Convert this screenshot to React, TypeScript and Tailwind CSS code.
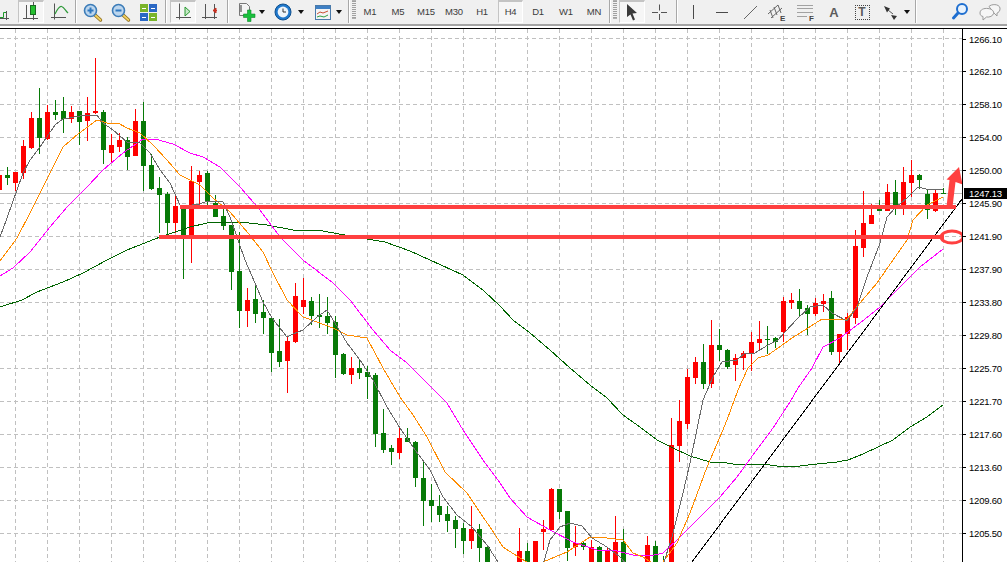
import React from 'react';

type C = [number, 'R' | 'G', number, number, number, number];
const candles: C[] = [
  [0,'R',170,195,175,190],[1,'G',167,185,175,178],[2,'R',172,191,172,183],[3,'R',140,179,146,173],[4,'R',112,149,118,148],
  [5,'G',88,154,118,138],[6,'R',105,140,112,139],[7,'G',100,120,112,115],[8,'G',97,133,111,119],[9,'R',106,123,112,119],
  [10,'G',111,145,111,122],[11,'R',97,141,113,121],[12,'R',58,114,111,113],[13,'G',110,164,112,150],[14,'R',134,162,145,153],
  [15,'R',133,152,140,147],[16,'G',137,170,140,157],[17,'R',109,156,121,156],[18,'G',102,191,121,166],[19,'G',154,190,165,189],
  [20,'G',177,233,188,195],[21,'G',192,234,194,223],[22,'R',195,233,206,223],[23,'G',205,279,209,235],[24,'R',166,263,181,235],
  [25,'R',171,205,175,182],[26,'G',171,205,173,201],[27,'G',195,217,203,217],[28,'G',205,230,216,226],[29,'G',225,290,225,272],
  [30,'G',232,328,271,311],[31,'R',288,327,300,311],[32,'G',284,323,299,314],[33,'G',300,334,312,318],[34,'G',316,372,318,353],
  [35,'G',319,367,351,362],[36,'R',336,393,341,361],[37,'R',283,343,296,342],[38,'R',278,314,300,307],[39,'G',297,325,301,316],
  [40,'G',294,328,315,317],[41,'G',297,334,316,323],[42,'G',316,378,322,355],[43,'G',353,375,354,374],[44,'R',357,384,368,375],
  [45,'G',359,379,368,373],[46,'G',366,399,372,377],[47,'G',373,447,375,434],[48,'G',409,453,433,450],[49,'G',445,465,448,452],
  [50,'R',428,459,438,453],[51,'G',428,442,438,442],[52,'G',441,487,442,478],[53,'G',460,526,478,501],[54,'G',484,522,500,506],
  [55,'G',495,522,506,515],[56,'G',506,532,514,521],[57,'G',516,548,520,529],[58,'G',523,554,528,541],[59,'R',506,549,529,541],
  [60,'G',524,570,529,548],[61,'G',546,570,547,570],[65,'R',528,570,551,570],[66,'G',543,570,551,570],[67,'R',541,570,541,570],
  [68,'R',520,550,529,532],[69,'R',488,531,489,530],[70,'G',489,519,489,512],[71,'G',511,561,511,548],[72,'R',526,556,543,547],
  [73,'G',541,550,543,547],[74,'R',540,570,547,570],[75,'G',546,570,547,570],[76,'R',547,570,551,570],[77,'R',516,570,542,570],
  [78,'G',529,570,542,570],[81,'R',536,570,545,570],[82,'G',541,570,546,570],[83,'G',556,570,570,570],[84,'R',418,570,445,570],
  [85,'R',400,462,421,446],[86,'R',369,429,377,424],[87,'R',357,384,362,378],[88,'G',344,389,362,384],[89,'R',320,388,345,384],
  [90,'G',329,361,345,350],[91,'G',349,369,350,367],[92,'R',354,381,358,365],[93,'R',351,370,353,358],[94,'R',332,371,342,354],
  [95,'R',321,350,339,343],[96,'G',326,354,339,340],[97,'G',337,348,338,342],[98,'R',297,342,301,332],[99,'R',293,309,300,303],
  [100,'G',289,317,301,309],[101,'G',305,335,308,314],[102,'R',298,316,303,314],[103,'R',294,312,301,304],[104,'G',291,355,298,352],
  [105,'R',334,363,334,352],[106,'R',313,350,317,334],[107,'R',230,324,246,318],[108,'R',191,257,223,248],[109,'R',204,224,215,224],
  [110,'G',200,211,209,211],[111,'R',184,211,192,211],[112,'G',180,215,192,209],[113,'R',167,215,182,209],[114,'R',160,197,175,183],
  [115,'G',174,189,175,180],[116,'G',189,219,194,210],[117,'R',190,212,193,211],[118,'G',188,194,193,194],
];

const grey = '0,237 7,218 17,190 23,173 30,160 40,147 55,125 63,119 80,116 97,115 103,123 113,130 127,142 140,143 150,153 160,170 170,183 180,205 192,205 200,204 207,201 223,202 230,217 245,260 255,283 263,302 272,318 287,337 293,334 303,330 317,317 327,310 335,323 347,343 360,360 373,380 387,407 400,428 413,447 430,470 443,497 457,515 472,527 487,545 500,565 543,565 550,540 560,527 570,523 582,526 592,538 607,547 620,557 627,565 663,565 672,537 683,493 690,463 703,400 713,377 722,362 737,360 745,353 755,353 768,345 778,340 785,332 798,318 810,307 823,305 832,313 847,321 857,307 867,277 880,243 887,217 895,208 907,198 918,187 930,190 943,189';
const orange = '0,261 17,238 30,213 43,187 63,147 78,134 97,120 107,123 118,123 127,128 140,133 153,145 167,160 180,175 200,185 213,198 230,212 248,233 263,252 273,273 287,300 303,317 317,322 333,328 347,335 367,338 383,368 400,397 413,415 427,437 445,472 467,493 483,517 490,527 503,547 520,558 532,565 543,562 567,552 590,537 607,538 623,540 633,553 643,557 655,565 663,562 677,543 690,513 707,467 720,437 727,420 738,390 748,368 758,358 768,355 778,348 792,338 808,328 822,319 847,319 860,303 877,283 893,260 907,240 913,220 927,205 943,197';
const magenta = '0,276 13,268 30,252 50,227 67,207 87,187 103,170 123,153 143,139 155,139 173,144 190,153 203,157 220,167 240,187 260,210 280,237 303,260 333,283 350,300 373,330 390,350 407,363 427,383 447,403 463,430 483,460 500,483 510,498 527,517 550,530 573,542 597,550 617,551 633,555 650,556 663,553 677,540 697,520 720,497 737,477 753,455 773,428 790,402 798,388 812,368 823,347 840,338 860,323 880,307 897,290 920,267 943,249';
const dark = '0,307 22,300 37,292 63,282 83,273 107,260 127,250 160,237 190,227 207,223 217,222 240,222 267,225 293,230 323,231 350,236 385,242 410,251 430,260 463,275 483,290 500,306 513,320 530,333 550,350 570,368 590,385 607,398 623,415 640,427 657,440 673,448 690,456 710,462 720,462 740,465 763,464 777,466 800,466 817,464 837,462 848,460 863,454 880,446 893,440 910,427 927,417 943,405';

const prices = ['1266.10','1262.10','1258.10','1254.00','1250.00','1245.90','1241.90','1237.90','1233.80','1229.80','1225.70','1221.70','1217.60','1213.60','1209.60','1205.50'];
const gridY = prices.map((_, i) => 38.5 + 32.97 * i);
const gridX = Array.from({ length: 30 }, (_, i) => 15.5 + 32 * i);

function Svg({ w = 24, children }: { w?: number; children: React.ReactNode }) {
  return <svg width={w} height={24} viewBox={`0 0 ${w} 24`} className="block shrink-0">{children}</svg>;
}
const Axes = ({ x = 6 }: { x?: number }) => <path d={`M${x + .5} 3.5v16M${x - 3} 17.5h15`} stroke="#555" fill="none" />;

const Sep = () => <div className="w-[2px] h-[23px] shrink-0 border-l border-[#a8a8a8] bg-white" />;
const Space = ({ w }: { w: number }) => <div className="shrink-0" style={{ width: w }} />;
const Slot = ({ w, children }: { w: number; children?: React.ReactNode }) => (
  <div className="shrink-0 h-6 flex items-center justify-center" style={{ width: w }}>{children}</div>
);
const Pressed = ({ children }: { children: React.ReactNode }) => (
  <div className="w-[26px] h-[23px] self-start shrink-0 flex items-center justify-center bg-[#f6f6f6] border-t-2 border-l border-[#c4c4c4] border-r border-r-white border-b border-b-white">{children}</div>
);
const Drop = () => (
  <Slot w={6}><svg width={6} height={4} viewBox="0 0 6 4" className="block"><path d="M0 0h6L3 4z" fill="#111" /></svg></Slot>
);
const Grip = () => (
  <div className="w-1 h-[19px] shrink-0 border-y border-[#b0b0b0] bg-[repeating-linear-gradient(to_bottom,#a0a0a0_0,#a0a0a0_1px,#f0f0f0_1px,#f0f0f0_2px)]" />
);
const Period = ({ t }: { t: string }) => <span className="text-[9.5px] tracking-[-0.2px] leading-none text-[#3c3c3c]">{t}</span>;

function Magnifier({ minus }: { minus?: boolean }) {
  return (
    <Svg>
      <path d="M15 15l5.500 5" stroke="#8a6a1c" strokeWidth={3.4} strokeLinecap="round" />
      <path d="M15 15l5.500 5" stroke="#f2d060" strokeWidth={1.8} strokeLinecap="round" />
      <circle cx={10.5} cy={10.5} r={6} fill="#bcd6ee" stroke="#3c7cb8" strokeWidth={1.6} />
      <path d={minus ? 'M7.500 10.500h6' : 'M7.500 10.500h6M10.500 7.500v6'} stroke="#2f78c0" strokeWidth={2} />
    </Svg>
  );
}

function Toolbar() {
  return (
    <div className="h-6 flex items-start bg-[#f0f0f0] overflow-hidden">
      <Slot w={18}>
        <svg width={18} height={24} viewBox="0 0 18 24" className="block">
          <path d="M0 17.5h3.5V12.5h3" stroke="#1d9a2a" fill="none" />
          <path d="M6.5 11v9M0 18.5h9" stroke="#555" fill="none" />
        </svg>
      </Slot>
      <Pressed>
        <Svg w={22}>
          <path d="M6.5 5v14M3 18.5h15M13.5 2v18" stroke="#555" fill="none" />
          <rect x={10.5} y={5.5} width={5} height={9} fill="#25c030" stroke="#1c6a22" />
        </Svg>
      </Pressed>
      <Slot w={31}>
        <Svg>
          <Axes x={6} />
          <path d="M7 14C9 10 11 6 13.5 6.5S17 10 20 13" stroke="#2f9a3a" strokeWidth={1.2} fill="none" />
        </Svg>
      </Slot>
      <Sep />
      <Slot w={29}><Magnifier /></Slot>
      <Slot w={28}><Magnifier minus /></Slot>
      <Slot w={28}>
        <svg width={17} height={17} viewBox="0 0 17 17" className="block">
          <rect width={8} height={8} fill="#7ab42a" /><rect x={9} width={8} height={8} fill="#2b68c4" />
          <rect y={9} width={8} height={8} fill="#2b68c4" /><rect x={9} y={9} width={8} height={8} fill="#7ab42a" />
          <path d="M2 4.5h4M11 4.5h4M2 13.5h4M11 13.5h4" stroke="#fff" />
        </svg>
      </Slot>
      <Space w={3} />
      <Sep />
      <Space w={3} />
      <Pressed>
        <Svg w={22}>
          <Axes x={7} />
          <path d="M13 7l5 4.5-5 4.5z" fill="#c6e8c6" stroke="#2a9a32" />
        </Svg>
      </Pressed>
      <Slot w={30}>
        <Svg>
          <path d="M6.5 4v15M3 17.5h15M15.5 4v15" stroke="#555" fill="none" />
          <path d="M18 10.5h-4M14 10.5l3-2.5v5z" stroke="#c83020" fill="#c83020" />
        </Svg>
      </Slot>
      <Space w={1} />
      <Sep />
      <Space w={2} />
      <Slot w={28}>
        <Svg>
          <path d="M6.5 3.5h7l3 3v9h-10z" fill="#f4f4f4" stroke="#777" />
          <path d="M8 5v7" stroke="#333" />
          <path d="M14.5 10v4h-4v3.500h4v4h3.500v-4h4V14h-4v-4z" fill="#18c03c" stroke="#0f8a2a" strokeWidth={0.6} />
        </Svg>
      </Slot>
      <Drop />
      <Space w={4} />
      <Slot w={28}>
        <Svg>
          <circle cx={12} cy={12} r={8} fill="#1f78cc" stroke="#10508e" />
          <circle cx={12} cy={12} r={5.4} fill="#eef4fa" />
          <path d="M12 8.500V12h3" stroke="#333" fill="none" />
        </Svg>
      </Slot>
      <Space w={1} />
      <Drop />
      <Space w={6} />
      <Slot w={25}>
        <svg width={16} height={15} viewBox="0 0 16 15" className="block">
          <rect x={0.5} y={0.5} width={15} height={14} fill="#f4f4f4" stroke="#4a7aaa" />
          <rect x={1} y={1} width={14} height={3} fill="#3f80c4" />
          <path d="M2 9l3-2 3 1 5-2" stroke="#c85030" fill="none" />
          <path d="M2 12l3-1 4 1 4-2" stroke="#30a040" fill="none" />
        </svg>
      </Slot>
      <Space w={1} />
      <Drop />
      <Space w={6} />
      <Sep />
      <Space w={2} />
      <Grip />
      {['M1','M5','M15','M30','H1'].map(t => <Slot key={t} w={28}><Period t={t} /></Slot>)}
      <Space w={2} />
      <div className="w-[25px] shrink-0 flex justify-center h-[23px] items-center bg-[#f6f6f6] border-t-2 border-l border-[#c4c4c4] border-r border-r-white border-b border-b-white"><Period t="H4" /></div>
      <Space w={1} />
      {['D1','W1','MN'].map(t => <Slot key={t} w={28}><Period t={t} /></Slot>)}
      <Space w={1} />
      <Sep />
      <Space w={2} />
      <Grip />
      <Space w={2} />
      <Pressed>
        <svg width={12} height={17} viewBox="0 0 12 17" className="block"><path d="M1 0l10 9-4.500 .5 2.500 6-2 1-2.500-6L1 13z" fill="#3a3a3a" /></svg>
      </Pressed>
      <Slot w={28}>
        <Svg><path d="M12.500 4.500v6M12.500 14v6M5 12.500h6M14 12.500h6" stroke="#555" fill="none" /></Svg>
      </Slot>
      <Space w={3} />
      <Sep />
      <Slot w={30}><Svg><path d="M12.500 5v14" stroke="#4a4a4a" /></Svg></Slot>
      <Slot w={28}><Svg><path d="M6 12.500h12" stroke="#4a4a4a" /></Svg></Slot>
      <Slot w={28}><Svg><path d="M6 19L19 6" stroke="#666" /></Svg></Slot>
      <Slot w={26}>
        <Svg>
          <path d="M3 14L13 5M6 18L17 8M5 10l3 8M9 7l3 8M13 5l3 8" stroke="#666" fill="none" />
          <text x={15} y={21} fontSize={8} fontWeight={700} fill="#444" fontFamily="Liberation Sans">E</text>
        </Svg>
      </Slot>
      <Slot w={30}>
        <Svg>
          <path d="M4.500 5.500h15M4.500 8.500h15M4.500 12.500h15M4.500 16.500h10" stroke="#555" strokeDasharray="1 1" fill="none" />
          <text x={16} y={21} fontSize={8} fontWeight={700} fill="#444" fontFamily="Liberation Sans">F</text>
        </Svg>
      </Slot>
      <Slot w={28}><span className="text-[13px] font-bold leading-none text-[#5c5c5c]">A</span></Slot>
      <Slot w={28}>
        <div className="relative w-[15px] h-[15px] border border-dotted border-[#444] flex items-center justify-center">
          <span className="text-[12px] font-bold leading-none text-[#5c5c5c]">T</span>
        </div>
      </Slot>
      <Slot w={28}>
        <Svg>
          <path d="M6 6l6 2.500-3 4z" fill="#333" />
          <path d="M10 10l5 4" stroke="#555" />
          <path d="M13 15l6 1-3 4z" fill="#333" />
        </Svg>
      </Slot>
      <Drop />
      <Space w={5} />
      <Sep />
      <Space w={30} />
      <Slot w={26}>
        <Svg>
          <circle cx={14} cy={9} r={5} fill="#e8f2fc" stroke="#1f6fd0" strokeWidth={2} />
          <path d="M10 13l-4.500 5" stroke="#1f6fd0" strokeWidth={3} strokeLinecap="round" />
        </Svg>
      </Slot>
      <Slot w={34}>
        <svg width={22} height={18} viewBox="0 0 22 18" className="block">
          <path d="M10 3.500C12 1 20 .5 21 5c.5 3-2 5-3 5l0 3-3-3z" fill="#f6f6f6" stroke="#9a9a9a" />
          <path d="M1 10c0-3.500 4-5 8-4.500s6 2.500 5.500 5-4 4-7 3.500L4 17v-3.500C2 13 1 12 1 10z" fill="#f6f6f6" stroke="#9a9a9a" />
        </svg>
      </Slot>
    </div>
  );
}

function Chart() {
  const green = '#077a07', red = '#ff0000';
  return (
    <svg width={962} height={533} viewBox="0 29 962 533" className="block shrink-0" shapeRendering="crispEdges">
      {gridY.map(y => <line key={y} x1={0} x2={962} y1={Math.floor(y) + .5} y2={Math.floor(y) + .5} stroke="#c0c0c0" strokeDasharray="4 3" />)}
      {gridX.map(x => <line key={x} x1={x} x2={x} y1={29} y2={562} stroke="#c0c0c0" strokeDasharray="4 3" />)}
      <line x1={0} x2={962} y1={193.5} y2={193.5} stroke="#c0c0c0" />
      {candles.map(([k, c, wt, wb, bt, bb]) => (
        <g key={k} fill={c === 'R' ? red : green}>
          <rect x={8 * k - 1} y={wt} width={1} height={wb - wt} />
          <rect x={8 * k - 3} y={bt} width={5} height={Math.max(bb - bt, 1)} />
        </g>
      ))}
      <polyline points={dark} fill="none" stroke="#006400" />
      <polyline points={magenta} fill="none" stroke="#ff00ff" />
      <polyline points={orange} fill="none" stroke="#ff8c00" />
      <polyline points={grey} fill="none" stroke="#696969" />
      <line x1={692} y1={562} x2={962} y2={199} stroke="#000" />
      <g shapeRendering="auto">
        <rect x={180} y={205} width={776} height={4} fill="#ff4040" />
        <rect x={159} y={235} width={785} height={4} fill="#ff4040" />
        <ellipse cx={952} cy={237} rx={11} ry={6} fill="none" stroke="#ff4040" strokeWidth={3} />
        <path d="M959 167L962.500 184.500 955.500 182 952.500 207 946.500 207 949.500 180 946.500 179.500Z" fill="#ff4040" />
      </g>
    </svg>
  );
}

function Axis() {
  return (
    <div className="relative flex-1 border-l border-black pt-[4.5px] overflow-hidden">
      {prices.map(p => (
        <div key={p} className="h-[32.97px] flex items-start">
          <div className="w-[3px] h-px bg-black mt-[5px] shrink-0" />
          <span className="ml-[3px] text-[9.5px] tracking-[-0.2px] leading-[11px] text-black">{p}</span>
        </div>
      ))}
      <div className="absolute left-[1px] top-[159px] w-[43px] h-[11px] bg-black text-white text-[9.5px] tracking-[-0.2px] leading-[11px] pl-[5px]">1247.13</div>
    </div>
  );
}

export default function App() {
  return (
    <div className="w-[1007px] h-[562px] overflow-hidden bg-white flex flex-col font-['Liberation_Sans']">
      <Toolbar />
      <div className="h-[2px] shrink-0 bg-[#a4a4a4]" />
      <div className="h-[2px] shrink-0 bg-white" />
      <div className="h-px shrink-0 bg-black" />
      <div className="flex flex-1 min-h-0">
        <Chart />
        <Axis />
      </div>
    </div>
  );
}
